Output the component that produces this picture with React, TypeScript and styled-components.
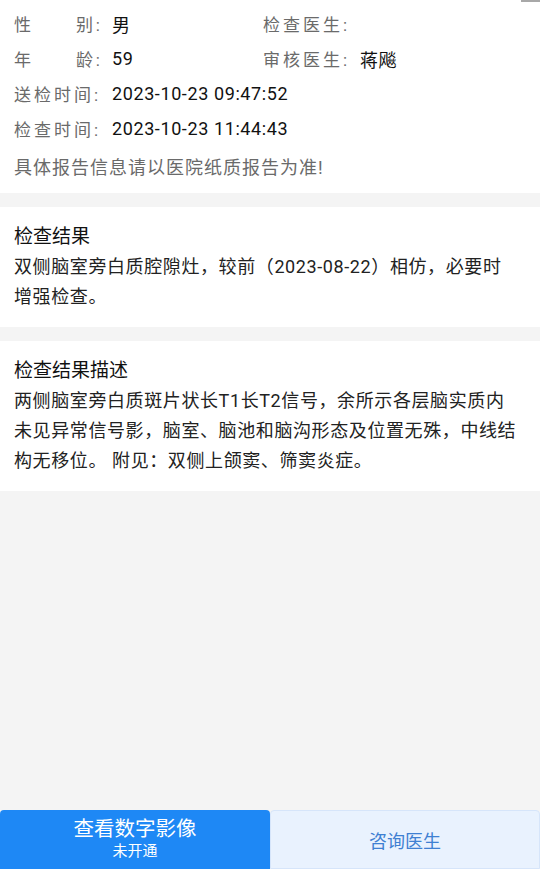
import { Fragment } from "react";
import styled, { createGlobalStyle } from "styled-components";

const GlobalStyle = createGlobalStyle`
  html, body {
    margin: 0;
    padding: 0;
    background: #f4f4f4;
    font-family: Roboto, "Noto Sans CJK SC", "Noto Sans", sans-serif;
  }
`;

const Page = styled.div`
  position: relative;
  height: 100vh;
  display: flex;
  flex-direction: column;
  background: #f4f4f4;
`;

const ScrollHint = styled.div`
  position: absolute;
  top: 0;
  right: 0;
  width: 19px;
  height: 2px;
  background: #a8a8a8;
`;

const Content = styled.main`
  flex: 1;
  display: flex;
  flex-direction: column;
  gap: 14px;
`;

const InfoCard = styled.section`
  background: #fff;
  padding: 6px 14px 8px;
`;

const InfoGrid = styled.div`
  display: grid;
  grid-template-columns: 249px 1fr;
`;

const InfoRow = styled.div<{ $span?: boolean }>`
  display: flex;
  align-items: center;
  height: 35px;
  white-space: nowrap;
  grid-column: ${({ $span }) => ($span ? "1 / -1" : "auto")};
`;

const Label = styled.span<{ $width: number }>`
  display: flex;
  justify-content: space-between;
  width: ${({ $width }) => $width}px;
  color: #6a6a6a;
  font-size: 17px;
  letter-spacing: 3px;
  flex-shrink: 0;
`;

const Value = styled.span<{ $gap: number }>`
  margin-left: ${({ $gap }) => $gap}px;
  color: #111;
  font-size: 18px;
  letter-spacing: 0.6px;
`;

const Note = styled.p`
  margin: 4px 0 0;
  line-height: 35px;
  font-size: 18px;
  color: #6a6a6a;
  letter-spacing: 1px;
`;

const Section = styled.section`
  background: #fff;
  padding: 15px 23px 15px 14px;
  line-height: 30px;
`;

const SectionTitle = styled.h3`
  margin: 0;
  font-size: 19px;
  font-weight: 400;
  color: #111;
`;

const SectionText = styled.p`
  margin: 0;
  font-size: 18px;
  letter-spacing: 0.6px;
  color: #222;
`;

const Footer = styled.footer`
  display: flex;
  height: 59px;
`;

const PrimaryButton = styled.button`
  flex: 0 0 270px;
  display: flex;
  flex-direction: column;
  align-items: center;
  justify-content: center;
  border: none;
  border-radius: 4px 4px 0 0;
  background: #1e88f5;
  color: #fff;
  font-family: inherit;
  padding: 0 0 2px;
`;

const PrimaryMain = styled.span`
  font-size: 20.5px;
  line-height: 26px;
`;

const PrimarySub = styled.span`
  font-size: 15px;
  line-height: 19px;
`;

const SecondaryButton = styled.button`
  flex: 1;
  border: 1px solid #d6e5fa;
  border-radius: 4px 4px 0 0;
  background: #e9f2fe;
  color: #3f80d2;
  font-family: inherit;
  font-size: 18px;
`;

const info = [
  { label: ["性", "别:"], value: "男", right: { label: "检查医生:", value: "" } },
  { label: ["年", "龄:"], value: "59", right: { label: "审核医生:", value: "蒋飚" } },
];

const times = [
  { label: "送检时间:", value: "2023-10-23 09:47:52" },
  { label: "检查时间:", value: "2023-10-23 11:44:43" },
];

export default function App() {
  return (
    <Page>
      <GlobalStyle />
      <ScrollHint />
      <Content>
        <InfoCard>
          <InfoGrid>
            {info.map((row) => (
              <Fragment key={row.label.join("")}>
                <InfoRow>
                  <Label $width={89}>
                    {row.label.map((c) => (
                      <span key={c}>{c}</span>
                    ))}
                  </Label>
                  <Value $gap={9}>{row.value}</Value>
                </InfoRow>
                <InfoRow>
                  <Label $width={86}>{row.right.label}</Label>
                  <Value $gap={11}>{row.right.value}</Value>
                </InfoRow>
              </Fragment>
            ))}
            {times.map((t) => (
              <InfoRow $span key={t.label}>
                <Label $width={89}>{t.label}</Label>
                <Value $gap={9}>{t.value}</Value>
              </InfoRow>
            ))}
          </InfoGrid>
          <Note>具体报告信息请以医院纸质报告为准!</Note>
        </InfoCard>

        <Section>
          <SectionTitle>检查结果</SectionTitle>
          <SectionText>双侧脑室旁白质腔隙灶，较前（2023-08-22）相仿，必要时增强检查。</SectionText>
        </Section>

        <Section>
          <SectionTitle>检查结果描述</SectionTitle>
          <SectionText>
            两侧脑室旁白质斑片状长T1长T2信号，余所示各层脑实质内未见异常信号影，脑室、脑池和脑沟形态及位置无殊，中线结构无移位。 附见：双侧上颌窦、筛窦炎症。
          </SectionText>
        </Section>
      </Content>

      <Footer>
        <PrimaryButton>
          <PrimaryMain>查看数字影像</PrimaryMain>
          <PrimarySub>未开通</PrimarySub>
        </PrimaryButton>
        <SecondaryButton>咨询医生</SecondaryButton>
      </Footer>
    </Page>
  );
}
